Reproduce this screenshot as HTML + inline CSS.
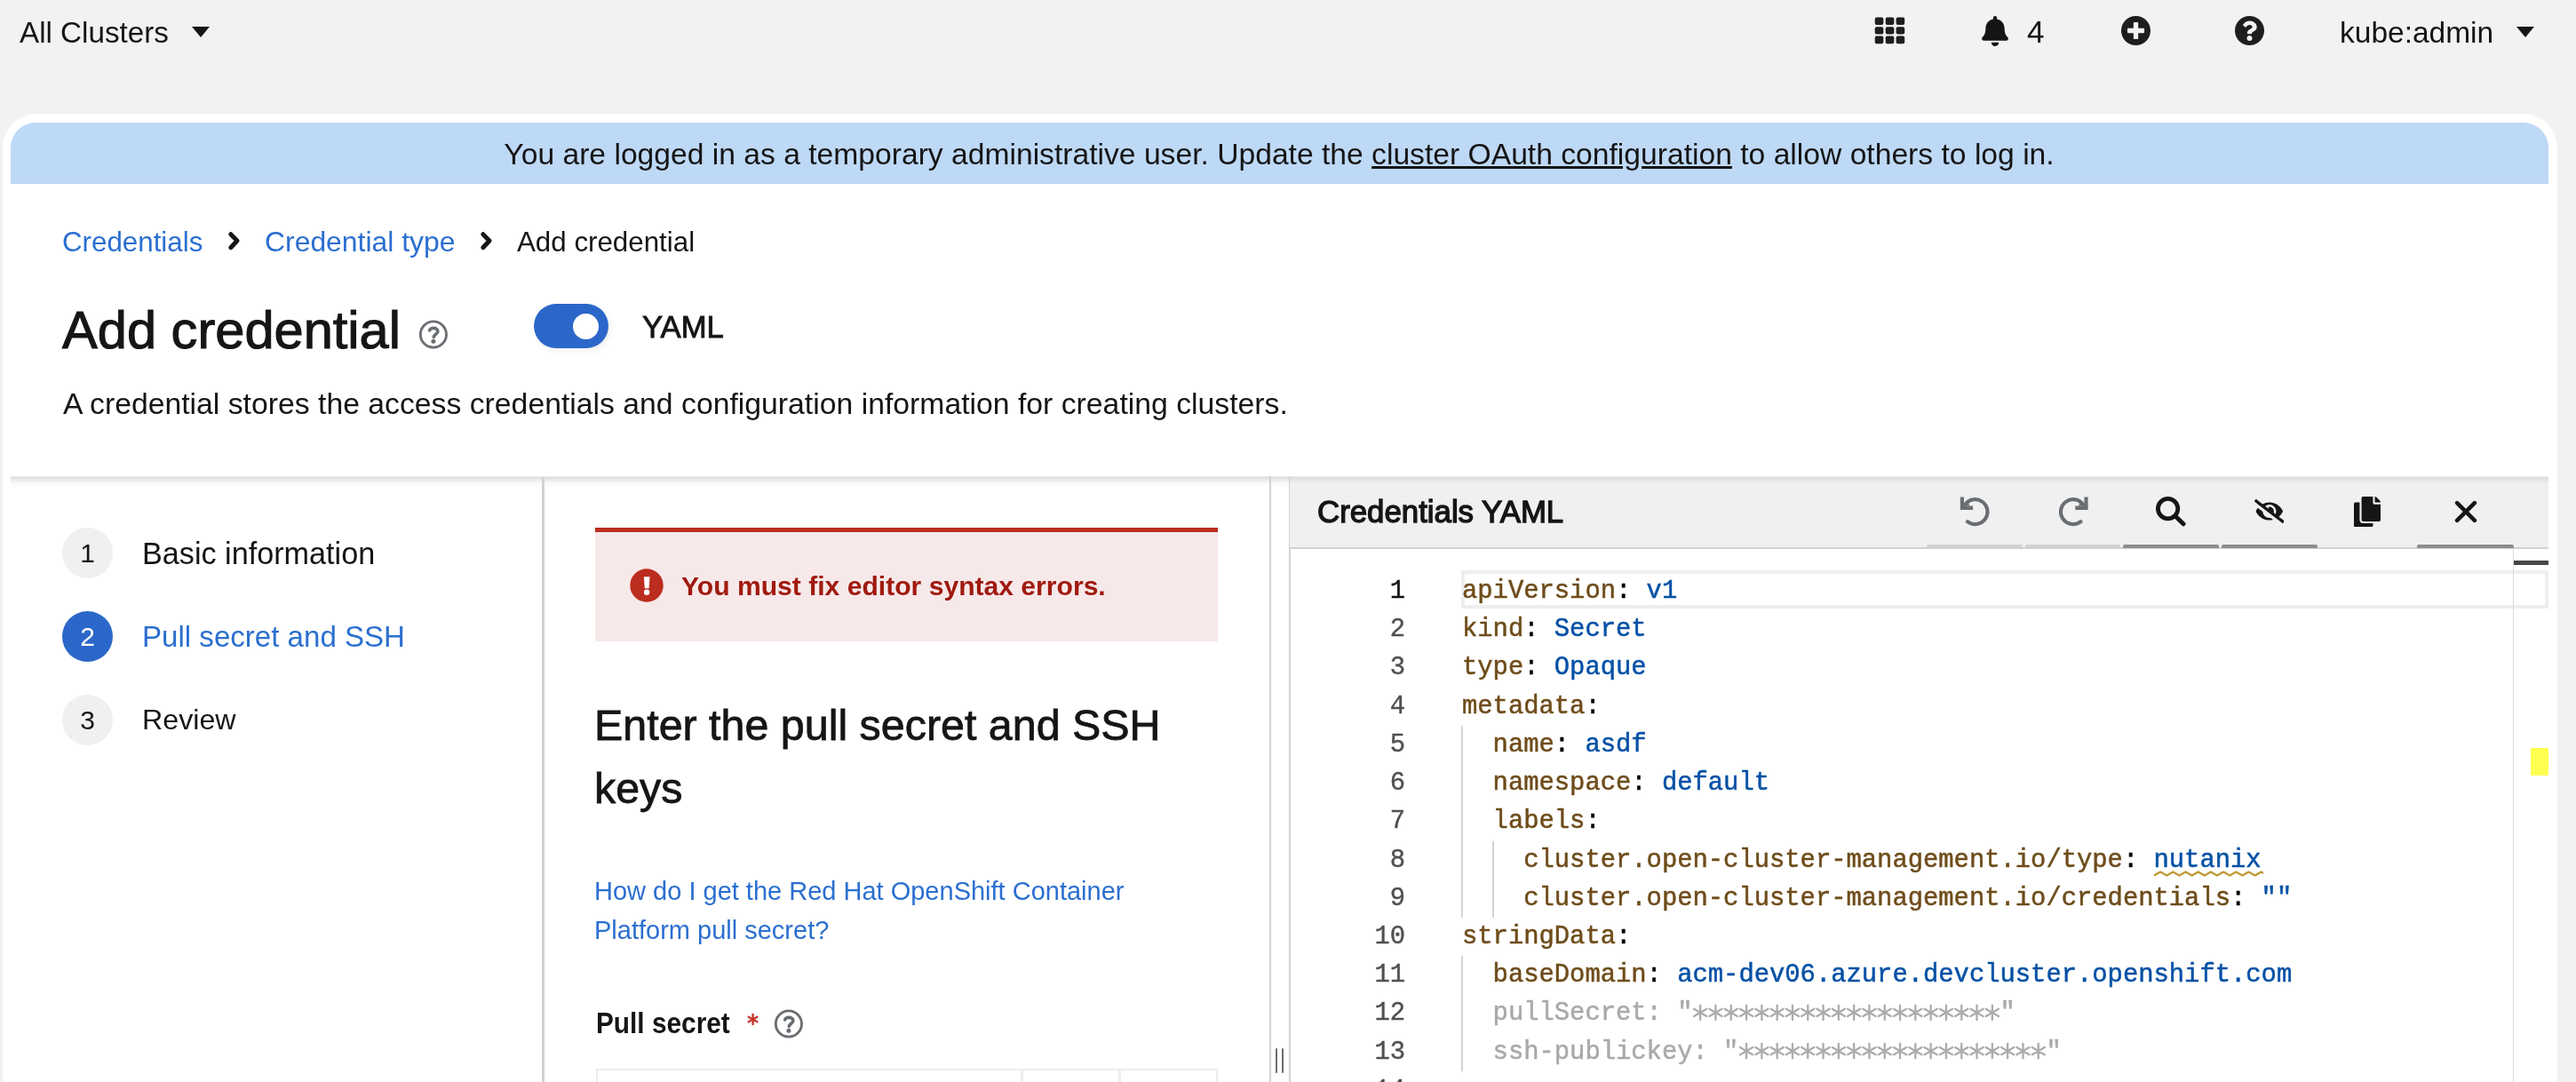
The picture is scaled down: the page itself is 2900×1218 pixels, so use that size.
<!DOCTYPE html>
<html><head><meta charset="utf-8">
<style>
*{margin:0;padding:0;box-sizing:border-box}
html,body{width:2900px;height:1218px;overflow:hidden;background:#f2f2f2;font-family:"Liberation Sans",sans-serif;color:#151515}
body{will-change:transform}
.a{position:absolute}
.t{position:absolute;white-space:nowrap}
#panel{position:absolute;left:3px;top:128px;width:2876px;height:1200px;background:#fff;border-radius:38px 38px 0 0}
#banner{position:absolute;left:12px;top:138px;width:2857px;height:69px;background:#bed9f6;border-radius:28px 28px 0 0}
.link{color:#2b6fd0}
.cl{position:absolute;left:1646px;white-space:pre;-webkit-text-stroke-width:0.5px;font-family:"Liberation Mono",monospace;font-size:28.83px;line-height:43.22px;height:43.22px;color:#000}
.ln{position:absolute;left:1499px;-webkit-text-stroke-width:0.4px;width:83px;text-align:right;font-family:"Liberation Mono",monospace;font-size:28.83px;line-height:43.22px;color:#505050}
.ln.act{color:#111}
.k{color:#6e4c1a}
.v{color:#0451a5}
.g{color:#a9a9a9}
.circ{position:absolute;width:57px;height:57px;border-radius:50%;background:#f0f0f0;text-align:center;font-size:30px;line-height:57px}
.uline{position:absolute;top:613px;height:4px;border-radius:2px 2px 0 0}
</style></head><body>
<!-- masthead -->
<div class="t" style="left:22px;top:20px;font-size:33.2px;line-height:33.2px">All Clusters</div>
<svg class="a" style="left:216px;top:30px" width="20" height="12" viewBox="0 0 20 12"><path d="M0 0H20L10 12Z" fill="#151515"/></svg>

<!-- grid icon -->
<svg class="a" style="left:2110px;top:19px" width="35" height="31" viewBox="0 0 35 31">
<g fill="#1e1e1e">
<rect x="0.7" y="0.4" width="9.6" height="8.7" rx="2"/><rect x="12.7" y="0.4" width="9.6" height="8.7" rx="2"/><rect x="24.6" y="0.4" width="9.6" height="8.7" rx="2"/>
<rect x="0.7" y="11.2" width="9.6" height="8.4" rx="2"/><rect x="12.7" y="11.2" width="9.6" height="8.4" rx="2"/><rect x="24.6" y="11.2" width="9.6" height="8.4" rx="2"/>
<rect x="0.7" y="21.6" width="9.6" height="8.7" rx="2"/><rect x="12.7" y="21.6" width="9.6" height="8.7" rx="2"/><rect x="24.6" y="21.6" width="9.6" height="8.7" rx="2"/>
</g></svg>
<!-- bell -->
<svg class="a" style="left:2231px;top:17.5px" width="30" height="34" viewBox="0 0 448 512"><path fill="#151515" d="M224 512c35.32 0 63.97-28.65 63.97-64H160.03c0 35.35 28.65 64 63.97 64zm215.39-149.71c-19.32-20.76-55.47-51.99-55.47-154.29 0-77.7-54.48-139.9-127.94-155.16V32c0-17.67-14.32-32-31.98-32s-31.98 14.33-31.98 32v20.840C118.56 68.1 64.08 130.3 64.08 208c0 102.3-36.15 133.53-55.47 154.290-6 6.45-8.66 14.16-8.61 21.71.11 16.4 12.98 32 32.1 32h383.8c19.12 0 32-15.6 32.1-32 .05-7.550-2.61-15.27-8.61-21.710z"/></svg>
<div class="t" style="left:2282px;top:18.3px;font-size:35px;line-height:35px">4</div>
<!-- plus circle -->
<svg class="a" style="left:2388px;top:18px" width="33" height="33" viewBox="8 8 496 496"><path fill="#1e1e1e" d="M256 8C119 8 8 119 8 256s111 248 248 248 248-111 248-248S393 8 256 8zm144 276c0 6.6-5.4 12-12 12h-92v92c0 6.6-5.4 12-12 12h-56c-6.6 0-12-5.4-12-12v-92h-92c-6.6 0-12-5.4-12-12v-56c0-6.6 5.4-12 12-12h92v-92c0-6.6 5.4-12 12-12h56c6.6 0 12 5.4 12 12v92h92c6.6 0 12 5.4 12 12v56z"/></svg>
<!-- question circle -->
<svg class="a" style="left:2515.5px;top:18px" width="33" height="33" viewBox="8 8 496 496"><path fill="#1e1e1e" d="M504 256c0 136.997-111.043 248-248 248S8 392.997 8 256C8 119.083 119.043 8 256 8s248 111.083 248 248zM262.655 90c-54.497 0-89.255 22.957-116.549 63.758-3.536 5.286-2.353 12.415 2.715 16.258l34.699 26.31c5.205 3.947 12.621 3.008 16.665-2.122 17.864-22.658 30.113-35.797 57.303-35.797 20.429 0 45.698 13.148 45.698 32.958 0 14.976-12.363 22.667-32.534 33.976C247.128 238.528 216 254.941 216 296v4c0 6.627 5.373 12 12 12h56c6.627 0 12-5.373 12-12v-1.333c0-28.462 83.186-29.647 83.186-106.667 0-58.002-60.165-102-116.531-102zM256 338c-25.365 0-46 20.635-46 46 0 25.364 20.635 46 46 46s46-20.636 46-46c0-25.365-20.635-46-46-46z"/></svg>

<div class="t" style="left:2634px;top:19.5px;font-size:33.5px;line-height:33.5px">kube:admin</div>
<svg class="a" style="left:2833px;top:30px" width="20" height="12" viewBox="0 0 20 12"><path d="M0 0H20L10 12Z" fill="#151515"/></svg>

<div id="panel"></div>
<div id="banner"></div>
<div class="t" style="left:0;width:2880px;text-align:center;top:156.5px;font-size:33.65px;line-height:33.65px">You are logged in as a temporary administrative user. Update the <span style="text-decoration:underline">cluster OAuth configuration</span> to allow others to log in.</div>

<!-- breadcrumb -->
<div class="t link" style="left:70px;top:257px;font-size:31.3px;line-height:31.3px">Credentials</div>
<svg class="a" style="left:254px;top:260px" width="20" height="24" viewBox="0 0 20 24"><path d="M5.8 3.7L13 11L5.8 18.7" fill="none" stroke="#151515" stroke-width="5" stroke-linecap="round" stroke-linejoin="round"/></svg>
<div class="t link" style="left:298px;top:256.5px;font-size:31.9px;line-height:31.9px">Credential type</div>
<svg class="a" style="left:538px;top:260px" width="20" height="24" viewBox="0 0 20 24"><path d="M5.8 3.7L13 11L5.8 18.7" fill="none" stroke="#151515" stroke-width="5" stroke-linecap="round" stroke-linejoin="round"/></svg>
<div class="t" style="left:582px;top:257px;font-size:31.3px;line-height:31.3px">Add credential</div>

<div class="t" style="left:70px;top:341.5px;font-size:59.6px;line-height:59.6px;-webkit-text-stroke:1.1px #151515">Add credential</div>
<!-- title help icon -->
<svg class="a" style="left:471px;top:360px" width="34" height="34" viewBox="0 0 34 34"><circle cx="16.9" cy="16.5" r="14.6" fill="none" stroke="#6a6e73" stroke-width="2.9"/><path d="M12.6 11.9C13.4 10 15.2 9.4 17.2 9.4C19.9 9.4 21.9 10.8 21.9 13.1C21.9 16.2 17.6 16.3 17.3 19.4" fill="none" stroke="#6a6e73" stroke-width="3.6" stroke-linecap="round"/><circle cx="16.9" cy="24.2" r="2.5" fill="#6a6e73"/></svg>
<!-- toggle -->
<div class="a" style="left:600.5px;top:341.6px;width:84px;height:50.8px;border-radius:26px;background:#2b67c9;box-shadow:3px 4px 6px rgba(0,0,0,0.05)"></div>
<div class="a" style="left:645px;top:352.8px;width:29px;height:29px;border-radius:50%;background:#fff"></div>
<div class="t" style="left:723px;top:350.6px;font-size:34.7px;line-height:34.7px;-webkit-text-stroke:0.9px #151515">YAML</div>
<div class="t" style="left:71px;top:437.5px;font-size:33.75px;line-height:33.75px">A credential stores the access credentials and configuration information for creating clusters.</div>

<!-- section shadow -->
<div class="a" style="left:12px;top:536px;width:2857px;height:12px;background:linear-gradient(rgba(0,0,0,0.05),rgba(0,0,0,0.12) 12%,rgba(0,0,0,0.03) 60%,rgba(0,0,0,0))"></div>
<!-- vertical dividers -->
<div class="a" style="left:610px;top:537px;width:2.6px;height:700px;background:#d2d2d2"></div>
<div class="a" style="left:1429px;top:536px;width:2px;height:700px;background:#d2d2d2"></div>
<div class="a" style="left:1450.5px;top:536px;width:2px;height:700px;background:#d2d2d2"></div>
<div class="a" style="left:1436px;top:1180px;width:2.2px;height:28px;border-radius:1px;background:#6a6e73"></div>
<div class="a" style="left:1443.3px;top:1180px;width:2.2px;height:28px;border-radius:1px;background:#6a6e73"></div>

<!-- steps -->
<div class="circ" style="left:70px;top:594px">1</div>
<div class="circ" style="left:70px;top:688px;background:#2b67c9;color:#fff">2</div>
<div class="circ" style="left:70px;top:781.5px">3</div>
<div class="t" style="left:160px;top:606px;font-size:34.2px;line-height:34.2px">Basic information</div>
<div class="t link" style="left:160px;top:700px;font-size:33.1px;line-height:33.1px">Pull secret and SSH</div>
<div class="t" style="left:160px;top:793.5px;font-size:32.2px;line-height:32.2px">Review</div>

<!-- alert -->
<div class="a" style="left:670px;top:593.8px;width:701px;height:128.2px;background:#f7e9e9;border-top:5px solid #bb2d1f"></div>
<svg class="a" style="left:708.5px;top:639.7px" width="38" height="38" viewBox="0 0 38 38"><circle cx="19" cy="19" r="18.7" fill="#bc2c1f"/><path d="M15.9 9.2h6.6l-0.9 13h-4.8z" fill="#fff"/><circle cx="19.1" cy="26.8" r="3.2" fill="#fff"/></svg>
<div class="t" style="left:767px;top:644.6px;font-size:30.1px;line-height:30.1px;font-weight:bold;color:#a01a10">You must fix editor syntax errors.</div>

<div class="a" style="left:669px;top:780.7px;font-size:48.4px;line-height:71px;width:700px;-webkit-text-stroke:0.8px #151515">Enter the pull secret and SSH keys</div>
<div class="a link" style="left:669px;top:980.6px;font-size:29px;line-height:44.2px;width:680px">How do I get the Red Hat OpenShift Container Platform pull secret?</div>
<div class="t" style="left:671px;top:1137.8px;font-size:29.8px;line-height:29.8px;font-weight:bold;transform:scaleY(1.12);transform-origin:0 25.2px">Pull secret</div>
<svg class="a" style="left:840px;top:1139.5px" width="15" height="15" viewBox="0 0 15 15"><g stroke="#c6352a" stroke-width="2.4" stroke-linecap="round"><path d="M7.6 2v11"/><path d="M2.8 4.8l9.6 5.5"/><path d="M2.8 10.3l9.6-5.5"/></g></svg>
<svg class="a" style="left:871px;top:1136px" width="34" height="34" viewBox="0 0 34 34"><circle cx="16.9" cy="16.5" r="14.6" fill="none" stroke="#6a6e73" stroke-width="2.9"/><path d="M12.6 11.9C13.4 10 15.2 9.4 17.2 9.4C19.9 9.4 21.9 10.8 21.9 13.1C21.9 16.2 17.6 16.3 17.3 19.4" fill="none" stroke="#6a6e73" stroke-width="3.6" stroke-linecap="round"/><circle cx="16.9" cy="24.2" r="2.5" fill="#6a6e73"/></svg>
<!-- file input -->
<div class="a" style="left:671px;top:1203px;width:700px;height:40px;border:2.5px solid #ededed"></div>
<div class="a" style="left:1149px;top:1203px;width:2.5px;height:40px;background:#ededed"></div>
<div class="a" style="left:1259px;top:1203px;width:2.5px;height:40px;background:#ededed"></div>

<!-- editor header -->
<div class="a" style="left:1452px;top:536.5px;width:1417px;height:80px;background:#f0f0f0"></div>
<div class="a" style="left:1452px;top:536.5px;width:1417px;height:8px;background:linear-gradient(rgba(0,0,0,0.08),rgba(0,0,0,0))"></div>
<div class="a" style="left:1452px;top:616px;width:1417px;height:2px;background:#d2d2d2"></div>
<div class="uline" style="left:2169px;width:108px;background:#d2d2d2"></div>
<div class="uline" style="left:2280px;width:107px;background:#d2d2d2"></div>
<div class="uline" style="left:2390px;width:108px;background:#8a8d90"></div>
<div class="uline" style="left:2501px;width:108px;background:#8a8d90"></div>
<div class="uline" style="left:2721px;width:109px;background:#8a8d90"></div>
<div class="t" style="left:1483px;top:559.4px;font-size:34.8px;line-height:34.8px;-webkit-text-stroke:1.35px #151515">Credentials YAML</div>
<!-- undo -->
<svg class="a" style="left:2206px;top:558.5px;overflow:visible" width="36" height="36" viewBox="0 0 36 36"><path d="M6.07 9.2A13.95 13.95 0 1 1 8.91 28.19" fill="none" stroke="#6a6e73" stroke-width="4.2" stroke-linecap="round"/><path d="M0.8 0.5h4.2v10.1h10.1v4.5H0.8z" fill="#6a6e73"/><path d="M5 10.6L9.5 6.6L11.5 10.6z" fill="#6a6e73"/></svg>
<!-- redo -->
<svg class="a" style="left:2317px;top:558.5px;overflow:visible" width="36" height="36" viewBox="0 0 36 36"><g transform="translate(34.4,0) scale(-1,1)"><path d="M6.07 9.2A13.95 13.95 0 1 1 8.91 28.19" fill="none" stroke="#6a6e73" stroke-width="4.2" stroke-linecap="round"/><path d="M0.8 0.5h4.2v10.1h10.1v4.5H0.8z" fill="#6a6e73"/><path d="M5 10.6L9.5 6.6L11.5 10.6z" fill="#6a6e73"/></g></svg>
<!-- search -->
<svg class="a" style="left:2427px;top:558.5px" width="35" height="34" viewBox="0 0 35 34"><circle cx="13.6" cy="13.6" r="11.2" fill="none" stroke="#151515" stroke-width="4.8"/><path d="M22.5 22.5L31 30.8" stroke="#151515" stroke-width="5" stroke-linecap="round"/></svg>
<!-- eye slash -->
<svg class="a" style="left:2537.8px;top:562.2px" width="33.7" height="27" viewBox="0 0 640 512"><path fill="#151515" d="M320 400c-75.85 0-137.25-58.71-142.9-133.11L72.2 185.82c-13.79 17.3-26.480 35.59-36.72 55.59a32.35 32.35 0 0 0 0 29.19C89.71 376.41 197.07 448 320 448c26.91 0 52.87-4 77.89-10.46L346 397.39a144.130 144.13 0 0 1-26 2.61zm313.82 58.1l-110.55-85.44a331.25 331.25 0 0 0 81.25-102.07 32.35 32.35 0 0 0 0-29.19C550.29 135.59 442.93 64 320 64a308.15 308.15 0 0 0-147.32 37.7L45.46 3.37A16 16 0 0 0 23 6.18L3.37 31.45A16 16 0 0 0 6.18 53.9l588.36 454.73a16 16 0 0 0 22.46-2.81l19.64-25.27a16 16 0 0 0-2.82-22.45zm-183.72-142l-39.3-30.38A94.75 94.75 0 0 0 416 256a94.76 94.76 0 0 0-121.31-92.21A47.65 47.65 0 0 1 304 192a46.64 46.64 0 0 1-1.54 10l-73.61-56.89A142.31 142.31 0 0 1 320 112a143.92 143.920 0 0 1 144 144c0 21.63-5.29 41.79-13.9 60.11z"/></svg>
<!-- copy -->
<svg class="a" style="left:2650px;top:558.5px" width="30" height="34.5" viewBox="0 0 448 512"><path fill="#151515" d="M320 448v40c0 13.255-10.745 24-24 24H24c-13.255 0-24-10.745-24-24V120c0-13.255 10.745-24 24-24h72v296c0 30.879 25.121 56 56 56h168zm0-344V0H152c-13.255 0-24 10.745-24 24v368c0 13.255 10.745 24 24 24h272c13.255 0 24-10.745 24-24V128H344c-13.2 0-24-10.8-24-24zm120.971-31.029L375.029 7.029A24 24 0 0 0 358.059 0H352v96h96v-6.059a24 24 0 0 0-7.029-16.970z"/></svg>
<!-- close -->
<svg class="a" style="left:2762.6px;top:562.9px" width="26" height="26" viewBox="0 0 26 26"><path d="M3.1 3.1L22.9 22.9M22.9 3.1L3.1 22.9" stroke="#151515" stroke-width="4.5" stroke-linecap="round"/></svg>

<!-- editor body -->
<div class="a" style="left:1645px;top:642.3px;width:1224px;height:42.8px;border:4.4px solid #eeeeee;border-right-width:4.5px"></div>
<div class="a" style="left:2828.5px;top:618px;width:1.2px;height:620px;background:#dcdcdc"></div>
<div class="a" style="left:2829.5px;top:631px;width:39.5px;height:5px;background:#484848"></div>
<div class="a" style="left:2848.7px;top:842px;width:20.3px;height:30.5px;background:#ffff50"></div>
<div class="a" style="left:1645.0px;top:816.9px;width:2px;height:216.1px;background:#d3d3d3"></div>
<div class="a" style="left:1679.6px;top:946.5px;width:2px;height:86.4px;background:#d3d3d3"></div>
<div class="a" style="left:1645.0px;top:1076.2px;width:2px;height:129.7px;background:#d3d3d3"></div>
<div class="ln act" style="top:644.00px">1</div>
<div class="ln" style="top:687.22px">2</div>
<div class="ln" style="top:730.44px">3</div>
<div class="ln" style="top:773.66px">4</div>
<div class="ln" style="top:816.88px">5</div>
<div class="ln" style="top:860.10px">6</div>
<div class="ln" style="top:903.32px">7</div>
<div class="ln" style="top:946.54px">8</div>
<div class="ln" style="top:989.76px">9</div>
<div class="ln" style="top:1032.98px">10</div>
<div class="ln" style="top:1076.20px">11</div>
<div class="ln" style="top:1119.42px">12</div>
<div class="ln" style="top:1162.64px">13</div>
<div class="ln" style="top:1205.86px">14</div>
<div class="cl" style="top:644.00px"><span class="k">apiVersion</span>: <span class="v">v1</span></div>
<div class="cl" style="top:687.22px"><span class="k">kind</span>: <span class="v">Secret</span></div>
<div class="cl" style="top:730.44px"><span class="k">type</span>: <span class="v">Opaque</span></div>
<div class="cl" style="top:773.66px"><span class="k">metadata</span>:</div>
<div class="cl" style="top:816.88px">  <span class="k">name</span>: <span class="v">asdf</span></div>
<div class="cl" style="top:860.10px">  <span class="k">namespace</span>: <span class="v">default</span></div>
<div class="cl" style="top:903.32px">  <span class="k">labels</span>:</div>
<div class="cl" style="top:946.54px">    <span class="k">cluster.open-cluster-management.io/type</span>: <span class="v">nutanix</span></div>
<div class="cl" style="top:989.76px">    <span class="k">cluster.open-cluster-management.io/credentials</span>: <span class="v">""</span></div>
<div class="cl" style="top:1032.98px"><span class="k">stringData</span>:</div>
<div class="cl" style="top:1076.20px">  <span class="k">baseDomain</span>: <span class="v">acm-dev06.azure.devcluster.openshift.com</span></div>
<div class="cl" style="top:1119.42px">  <span class="g">pullSecret: "                    "</span></div>
<div class="cl" style="top:1162.64px">  <span class="g">ssh-publickey: "                    "</span></div>
<svg class="a" style="left:2424.5px;top:980px" width="123" height="8"><path d="M0 5.5 L7.10 1.5 L14.20 5.5 L21.30 1.5 L28.40 5.5 L35.50 1.5 L42.60 5.5 L49.70 1.5 L56.80 5.5 L63.90 1.5 L71.00 5.5 L78.10 1.5 L85.20 5.5 L92.30 1.5 L99.40 5.5 L106.50 1.5 L113.60 5.5 L120.70 1.5 L127.80 5.5" fill="none" stroke="#bf9a35" stroke-width="2.4" stroke-linejoin="round"/></svg><svg class="a" style="left:0;top:0" width="2900" height="1218"><path d="M1914.15 1131.62L1914.15 1148.02M1907.05 1135.72L1921.25 1143.92M1907.05 1143.92L1921.25 1135.72M1931.45 1131.62L1931.45 1148.02M1924.35 1135.72L1938.55 1143.92M1924.35 1143.92L1938.55 1135.72M1948.75 1131.62L1948.75 1148.02M1941.65 1135.72L1955.85 1143.92M1941.65 1143.92L1955.85 1135.72M1966.05 1131.62L1966.05 1148.02M1958.95 1135.72L1973.15 1143.92M1958.95 1143.92L1973.15 1135.72M1983.35 1131.62L1983.35 1148.02M1976.25 1135.72L1990.45 1143.92M1976.25 1143.92L1990.45 1135.72M2000.65 1131.62L2000.65 1148.02M1993.55 1135.72L2007.75 1143.92M1993.55 1143.92L2007.75 1135.72M2017.95 1131.62L2017.95 1148.02M2010.85 1135.72L2025.05 1143.92M2010.85 1143.92L2025.05 1135.72M2035.25 1131.62L2035.25 1148.02M2028.15 1135.72L2042.35 1143.92M2028.15 1143.92L2042.35 1135.72M2052.55 1131.62L2052.55 1148.02M2045.45 1135.72L2059.65 1143.92M2045.45 1143.92L2059.65 1135.72M2069.85 1131.62L2069.85 1148.02M2062.75 1135.72L2076.95 1143.92M2062.75 1143.92L2076.95 1135.72M2087.15 1131.62L2087.15 1148.02M2080.05 1135.72L2094.25 1143.92M2080.05 1143.92L2094.25 1135.72M2104.45 1131.62L2104.45 1148.02M2097.35 1135.72L2111.55 1143.92M2097.35 1143.92L2111.55 1135.72M2121.75 1131.62L2121.75 1148.02M2114.65 1135.72L2128.85 1143.92M2114.65 1143.92L2128.85 1135.72M2139.05 1131.62L2139.05 1148.02M2131.95 1135.72L2146.15 1143.92M2131.95 1143.92L2146.15 1135.72M2156.35 1131.62L2156.35 1148.02M2149.25 1135.72L2163.45 1143.92M2149.25 1143.92L2163.45 1135.72M2173.65 1131.62L2173.65 1148.02M2166.55 1135.72L2180.75 1143.92M2166.55 1143.92L2180.75 1135.72M2190.95 1131.62L2190.95 1148.02M2183.85 1135.72L2198.05 1143.92M2183.85 1143.92L2198.05 1135.72M2208.25 1131.62L2208.25 1148.02M2201.15 1135.72L2215.35 1143.92M2201.15 1143.92L2215.35 1135.72M2225.55 1131.62L2225.55 1148.02M2218.45 1135.72L2232.65 1143.92M2218.45 1143.92L2232.65 1135.72M2242.85 1131.62L2242.85 1148.02M2235.75 1135.72L2249.95 1143.92M2235.75 1143.92L2249.95 1135.72M1966.05 1174.84L1966.05 1191.24M1958.95 1178.94L1973.15 1187.14M1958.95 1187.14L1973.15 1178.94M1983.35 1174.84L1983.35 1191.24M1976.25 1178.94L1990.45 1187.14M1976.25 1187.14L1990.45 1178.94M2000.65 1174.84L2000.65 1191.24M1993.55 1178.94L2007.75 1187.14M1993.55 1187.14L2007.75 1178.94M2017.95 1174.84L2017.95 1191.24M2010.85 1178.94L2025.05 1187.14M2010.85 1187.14L2025.05 1178.94M2035.25 1174.84L2035.25 1191.24M2028.15 1178.94L2042.35 1187.14M2028.15 1187.14L2042.35 1178.94M2052.55 1174.84L2052.55 1191.24M2045.45 1178.94L2059.65 1187.14M2045.45 1187.14L2059.65 1178.94M2069.85 1174.84L2069.85 1191.24M2062.75 1178.94L2076.95 1187.14M2062.75 1187.14L2076.95 1178.94M2087.15 1174.84L2087.15 1191.24M2080.05 1178.94L2094.25 1187.14M2080.05 1187.14L2094.25 1178.94M2104.45 1174.84L2104.45 1191.24M2097.35 1178.94L2111.55 1187.14M2097.35 1187.14L2111.55 1178.94M2121.75 1174.84L2121.75 1191.24M2114.65 1178.94L2128.85 1187.14M2114.65 1187.14L2128.85 1178.94M2139.05 1174.84L2139.05 1191.24M2131.95 1178.94L2146.15 1187.14M2131.95 1187.14L2146.15 1178.94M2156.35 1174.84L2156.35 1191.24M2149.25 1178.94L2163.45 1187.14M2149.25 1187.14L2163.45 1178.94M2173.65 1174.84L2173.65 1191.24M2166.55 1178.94L2180.75 1187.14M2166.55 1187.14L2180.75 1178.94M2190.95 1174.84L2190.95 1191.24M2183.85 1178.94L2198.05 1187.14M2183.85 1187.14L2198.05 1178.94M2208.25 1174.84L2208.25 1191.24M2201.15 1178.94L2215.35 1187.14M2201.15 1187.14L2215.35 1178.94M2225.55 1174.84L2225.55 1191.24M2218.45 1178.94L2232.65 1187.14M2218.45 1187.14L2232.65 1178.94M2242.85 1174.84L2242.85 1191.24M2235.75 1178.94L2249.95 1187.14M2235.75 1187.14L2249.95 1178.94M2260.15 1174.84L2260.15 1191.24M2253.05 1178.94L2267.25 1187.14M2253.05 1187.14L2267.25 1178.94M2277.45 1174.84L2277.45 1191.24M2270.35 1178.94L2284.55 1187.14M2270.35 1187.14L2284.55 1178.94M2294.75 1174.84L2294.75 1191.24M2287.65 1178.94L2301.85 1187.14M2287.65 1187.14L2301.85 1178.94" stroke="#acacac" stroke-width="2.3" stroke-linecap="round" fill="none"/></svg>
</body></html>
